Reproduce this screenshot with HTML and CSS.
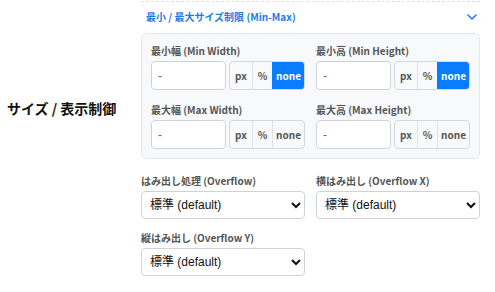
FILE: index.html
```html
<!DOCTYPE html>
<html lang="ja">
<head>
    <meta charset="UTF-8">
    <meta name="viewport" content="width=device-width, initial-scale=1.0">
    <title>サイズ / 表示制御</title>
    <link rel="stylesheet" href="styles.css">
</head>
<body>
    <div class="setting-row">
        <div class="row-label">サイズ / 表示制御</div>
        <div class="row-body">
            <div class="section-head">
                <span class="section-title">最小 / 最大サイズ制限 (Min-Max)</span>
                <svg class="chevron" width="10" height="6" viewBox="0 0 10 6">
                    <polyline points="1,1 5,5 9,1" fill="none" stroke="#1e7ce8" stroke-width="1.6" stroke-linecap="round" stroke-linejoin="round"/>
                </svg>
            </div>

            <div class="minmax-panel">
                <div class="field">
                    <label class="field-label">最小幅 (Min Width)</label>
                    <div class="unit-row">
                        <input type="text" class="unit-input" placeholder="-">
                        <div class="unit-group">
                            <button type="button" class="unit-btn u-px">px</button>
                            <button type="button" class="unit-btn u-pct">%</button>
                            <button type="button" class="unit-btn u-none active">none</button>
                        </div>
                    </div>
                </div>
                <div class="field">
                    <label class="field-label">最小高 (Min Height)</label>
                    <div class="unit-row">
                        <input type="text" class="unit-input" placeholder="-">
                        <div class="unit-group">
                            <button type="button" class="unit-btn u-px">px</button>
                            <button type="button" class="unit-btn u-pct">%</button>
                            <button type="button" class="unit-btn u-none active">none</button>
                        </div>
                    </div>
                </div>
                <div class="field">
                    <label class="field-label">最大幅 (Max Width)</label>
                    <div class="unit-row">
                        <input type="text" class="unit-input" placeholder="-">
                        <div class="unit-group">
                            <button type="button" class="unit-btn u-px">px</button>
                            <button type="button" class="unit-btn u-pct">%</button>
                            <button type="button" class="unit-btn u-none">none</button>
                        </div>
                    </div>
                </div>
                <div class="field">
                    <label class="field-label">最大高 (Max Height)</label>
                    <div class="unit-row">
                        <input type="text" class="unit-input" placeholder="-">
                        <div class="unit-group">
                            <button type="button" class="unit-btn u-px">px</button>
                            <button type="button" class="unit-btn u-pct">%</button>
                            <button type="button" class="unit-btn u-none">none</button>
                        </div>
                    </div>
                </div>
            </div>

            <div class="overflow-grid">
                <div class="field">
                    <label class="field-label" for="overflow">はみ出し処理 (Overflow)</label>
                    <select id="overflow" class="select-box">
                        <option>標準 (default)</option>
                        <option>visible</option>
                        <option>hidden</option>
                        <option>scroll</option>
                        <option>auto</option>
                    </select>
                </div>
                <div class="field">
                    <label class="field-label" for="overflowX">横はみ出し (Overflow X)</label>
                    <select id="overflowX" class="select-box">
                        <option>標準 (default)</option>
                        <option>visible</option>
                        <option>hidden</option>
                        <option>scroll</option>
                        <option>auto</option>
                    </select>
                </div>
                <div class="field">
                    <label class="field-label" for="overflowY">縦はみ出し (Overflow Y)</label>
                    <select id="overflowY" class="select-box">
                        <option>標準 (default)</option>
                        <option>visible</option>
                        <option>hidden</option>
                        <option>scroll</option>
                        <option>auto</option>
                    </select>
                </div>
            </div>
        </div>
    </div>
</body>
</html>
```

FILE: styles.css
```css
body {
    margin: 0;
    font-family: "Noto Sans CJK JP", "Noto Sans", sans-serif;
    background-color: #ffffff;
    color: #222;
}
.setting-row {
    display: flex;
}
.row-label {
    width: 134px;
    padding-left: 7px;
    padding-top: 98px;
    font-size: 14px;
    line-height: 20px;
    font-weight: 700;
    color: #111;
}
.row-body {
    width: 339px;
    padding-top: 1px;
}
.section-head {
    display: flex;
    justify-content: space-between;
    align-items: center;
    border-top: 1px dashed #dcdfe3;
    padding: 7px 3px 9px 5px;
}
.section-title {
    font-size: 10px;
    line-height: 15px;
    font-weight: 700;
    color: #1e7ce8;
}
.chevron {
    display: block;
}
.minmax-panel {
    display: grid;
    grid-template-columns: 1fr 1fr;
    column-gap: 11px;
    row-gap: 12px;
    padding: 9px;
    background-color: #f8f9fa;
    border: 1px solid #e4e7eb;
    border-radius: 6px;
}
.field {
    display: flex;
    flex-direction: column;
}
.field-label {
    font-size: 10px;
    line-height: 15px;
    font-weight: 700;
    color: #555;
    margin-bottom: 3px;
}
.unit-row {
    display: flex;
    gap: 3px;
}
.unit-input {
    width: 75px;
    height: 29px;
    box-sizing: border-box;
    padding: 0 6px;
    border: 1px solid #cfd3d8;
    border-radius: 4px;
    font-family: "Liberation Sans", "Noto Sans CJK JP", sans-serif;
    font-size: 12px;
    background-color: #fff;
}
.unit-input::placeholder {
    color: #666;
}
.unit-group {
    display: flex;
    flex: 1;
    height: 29px;
    box-sizing: border-box;
    border: 1px solid #d4d8dd;
    border-radius: 4px;
    overflow: hidden;
    background-color: #f8f9fa;
}
.unit-btn {
    border: none;
    border-left: 1px solid #dfe2e6;
    background: none;
    padding: 0;
    font-family: "Noto Sans CJK JP", sans-serif;
    font-size: 10px;
    font-weight: 700;
    color: #555;
    cursor: pointer;
}
.unit-btn:first-child {
    border-left: none;
}
.u-px {
    width: 22px;
}
.u-pct {
    width: 20px;
}
.u-none {
    flex: 1;
}
.unit-btn.active {
    background-color: #0a7cff;
    color: #fff;
    border-left-color: #0a7cff;
}
.overflow-grid {
    display: grid;
    grid-template-columns: 1fr 1fr;
    column-gap: 11px;
    row-gap: 11px;
    margin-top: 14px;
}
.select-box {
    height: 28px;
    padding: 0 4px;
    border: 1px solid #cfd3d8;
    border-radius: 4px;
    background-color: #fff;
    font-family: "Liberation Sans", "Noto Sans CJK JP", sans-serif;
    font-size: 12px;
    color: #111;
}
```
